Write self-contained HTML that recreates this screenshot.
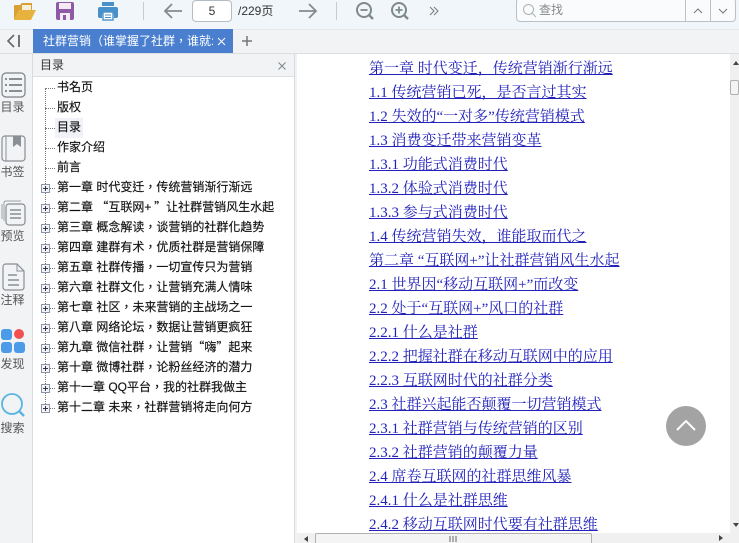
<!DOCTYPE html>
<html><head><meta charset="utf-8"><style>
html,body{margin:0;padding:0}
body{width:739px;height:543px;overflow:hidden;position:relative;background:#fff;font-family:"Liberation Sans","Noto Sans CJK SC",sans-serif;color:#333}
div,a,svg{position:absolute}
.toc{left:57px;font-family:"Liberation Sans","Noto Sans CJK TC",sans-serif;font-size:12px;line-height:20px;height:20px;white-space:nowrap;color:#111;-webkit-text-stroke:.15px #111}
.q{font-family:"Noto Sans CJK SC",sans-serif}
.p{letter-spacing:2.700px}
.box{left:41px;width:9px;height:9px;box-sizing:border-box;border:1px solid #8a96a8;background:#f2f4f8}
.box:before{content:"";position:absolute;left:1px;top:3px;width:5px;height:1px;background:#334}
.box:after{content:"";position:absolute;left:3px;top:1px;width:1px;height:5px;background:#334}
.dh{left:45px;width:10px;height:0;border-top:1px dotted #777}
.c{left:369px;font-family:"Liberation Serif","Noto Serif CJK SC",serif;font-size:15px;line-height:24px;height:24px;white-space:nowrap;color:#2222bb;text-decoration:underline}
.sl{left:0;width:33px;text-align:center;font-size:12px;line-height:14px;color:#555}
</style></head><body>
<div style="left:0;top:0;width:739px;height:29px;background:#f1f6fa"></div>
<div style="left:0;top:29px;width:739px;height:25px;background:#f1f3f5;border-top:1px solid #e4e8ec;box-sizing:border-box"></div>
<div style="left:0;top:53px;width:739px;height:1px;background:#dcdfe2"></div>

<svg style="left:13px;top:2px" width="24" height="19" viewBox="0 0 24 19"><path d="M1 18V4q0-1 1-1h5l2-2h10v7H6L1 18z" fill="#d9a035"/><path d="M9 3h9v5H9z" fill="#f6efdc"/><path d="M6 8h17l-5 10H1z" fill="#e8b23f"/></svg>
<svg style="left:56px;top:2px" width="19" height="19" viewBox="0 0 19 19"><rect x="0" y="0" width="18" height="18" rx="2" fill="#8e5aa5"/><rect x="3" y="1" width="12" height="6" fill="#f3eaf6"/><rect x="4" y="11" width="10" height="7" fill="#f3eaf6"/><rect x="7" y="13" width="3" height="5" fill="#8e5aa5"/></svg>
<svg style="left:98px;top:2px" width="20" height="19" viewBox="0 0 20 19"><rect x="4" y="0" width="12" height="4" fill="#4a90c8"/><path d="M2 5h16q2 0 2 2v7q0 2-2 2h-2v-4H4v4H2q-2 0-2-2V7q0-2 2-2z" fill="#4a90c8"/><rect x="5" y="10" width="10" height="8" fill="#fff" stroke="#4a90c8" stroke-width="1.400"/><path d="M7 13h6M7 15.500h6" stroke="#4a90c8"/></svg>
<div style="left:143px;top:2px;width:1px;height:18px;background:#c8ccd0"></div>
<svg style="left:163px;top:2px" width="20" height="18" viewBox="0 0 20 18"><path d="M9 2L2 9l7 7M2 9h17" fill="none" stroke="#88898b" stroke-width="1.800"/></svg>
<div style="left:192px;top:0;width:40px;height:22px;box-sizing:border-box;border:1px solid #b4bcc4;border-radius:4px;background:#fff;text-align:center;font-size:12px;line-height:20px;color:#333">5</div>
<div style="left:238px;top:2px;font-size:12px;line-height:18px;color:#333;white-space:nowrap">/229页</div>
<svg style="left:298px;top:2px" width="20" height="18" viewBox="0 0 20 18"><path d="M11 2l7 7-7 7M18 9H1" fill="none" stroke="#88898b" stroke-width="1.800"/></svg>
<div style="left:336px;top:2px;width:1px;height:18px;background:#c8ccd0"></div>
<svg style="left:355px;top:1px" width="20" height="20" viewBox="0 0 20 20"><circle cx="9" cy="9" r="7" fill="none" stroke="#7e8a8a" stroke-width="2"/><path d="M14 14l4 4" stroke="#7e8a8a" stroke-width="2.400"/><path d="M5.500 9h7" stroke="#7e8a8a" stroke-width="1.800"/></svg>
<svg style="left:390px;top:1px" width="20" height="20" viewBox="0 0 20 20"><circle cx="9" cy="9" r="7" fill="none" stroke="#7e8a8a" stroke-width="2"/><path d="M14 14l4 4" stroke="#7e8a8a" stroke-width="2.400"/><path d="M5.500 9h7M9 5.500v7" stroke="#7e8a8a" stroke-width="1.800"/></svg>
<svg style="left:429px;top:6px" width="10" height="10" viewBox="0 0 10 10"><path d="M1 1l4 4-4 4M5 1l4 4-4 4" fill="none" stroke="#777" stroke-width="1"/></svg>

<div style="left:516px;top:-2px;width:220px;height:24px;box-sizing:border-box;border:1px solid #b8c0c8;border-radius:4px;background:#f9fbfc"></div>
<div style="left:685px;top:0;width:1px;height:22px;background:#b8c0c8"></div>
<div style="left:710px;top:0;width:1px;height:22px;background:#b8c0c8"></div>
<svg style="left:522px;top:3px" width="15" height="15" viewBox="0 0 15 15"><circle cx="6.500" cy="6.500" r="5" fill="none" stroke="#aab2b8"/><path d="M10 10l4 4" stroke="#aab2b8"/></svg>
<div style="left:539px;top:2px;font-size:12px;line-height:17px;color:#888">查找</div>
<svg style="left:693px;top:8px" width="10" height="6" viewBox="0 0 10 6"><path d="M1 5l4-4 4 4" fill="none" stroke="#777"/></svg>
<svg style="left:718px;top:8px" width="10" height="6" viewBox="0 0 10 6"><path d="M1 1l4 4 4-4" fill="none" stroke="#777"/></svg>

<svg style="left:6px;top:34px" width="15" height="14" viewBox="0 0 15 14"><path d="M8 1L2 7l6 6" fill="none" stroke="#666" stroke-width="1.600"/><path d="M13 1v12" stroke="#666" stroke-width="1.800"/></svg>
<div style="left:33px;top:29px;width:200px;height:24px;background:#4a7fd0"></div>
<div style="left:43px;top:29px;width:170px;height:24px;overflow:hidden;font-family:'Liberation Sans','Noto Sans CJK TC',sans-serif;font-size:12px;line-height:24px;color:#fff;white-space:nowrap">社群营销（谁掌握了社群，谁就:</div>
<svg style="left:217px;top:37px" width="9" height="9" viewBox="0 0 9 9"><path d="M1 1l7 7M8 1L1 8" stroke="#fff"/></svg>
<svg style="left:241px;top:35px" width="12" height="12" viewBox="0 0 12 12"><path d="M1 6h10M6 1v10" stroke="#777" stroke-width="1.500"/></svg>

<!-- left rail -->
<div style="left:0;top:54px;width:32px;height:489px;background:#f1f3f5;border-right:1px solid #d8dbde"></div>
<svg style="left:1px;top:72px" width="25" height="26" viewBox="0 0 25 26"><rect x="1" y="1" width="23" height="24" rx="4" fill="#f1f3f5" stroke="#7c8288" stroke-width="1.200"/><path d="M4 7h2M8 7h13M4 13h2M8 13h13M4 19h2M8 19h13" stroke="#666c72" stroke-width="1.600"/></svg>
<div class="sl" style="top:100px;left:-4px">目录</div>
<svg style="left:1px;top:135px" width="25" height="28" viewBox="0 0 25 28"><rect x="1" y="1" width="23" height="25" rx="3" fill="none" stroke="#8a8f95" stroke-width="1.200"/><path d="M5 1v25" stroke="#8a8f95"/><path d="M12 1h8v11l-4-3-4 3z" fill="#8a8f95"/></svg>
<div class="sl" style="top:165px;left:-4px">书签</div>
<svg style="left:1px;top:199px" width="26" height="28" viewBox="0 0 26 28"><path d="M3 22V4q0-2 2-2h15M1 20V5" fill="none" stroke="#9aa0a6"/><rect x="5" y="5" width="19" height="21" rx="3" fill="#f1f3f5" stroke="#878c92" stroke-width="1.200"/><path d="M9 11h11M9 15h11M9 19h11" stroke="#878c92" stroke-width="1.500"/></svg>
<div class="sl" style="top:229px;left:-4px">预览</div>
<svg style="left:2px;top:263px" width="23" height="28" viewBox="0 0 23 28"><path d="M15 1H4Q1 1 1 4v20q0 3 3 3h15q3 0 3-3V8z" fill="none" stroke="#8a8f95" stroke-width="1.200"/><path d="M15 1v7h7" fill="none" stroke="#8a8f95"/><path d="M6 12h9M6 17h11M6 22h11" stroke="#8a8f95" stroke-width="1.500"/></svg>
<div class="sl" style="top:293px;left:-4px">注释</div>
<div style="left:1px;top:329px;width:11px;height:11px;border-radius:3px;background:#4c9be8"></div>
<div style="left:14px;top:329px;width:10px;height:10px;border-radius:50%;background:#f05050"></div>
<div style="left:1px;top:342px;width:11px;height:11px;border-radius:3px;background:#4c9be8"></div>
<div style="left:14px;top:342px;width:11px;height:11px;border-radius:3px;background:#4c9be8"></div>
<div class="sl" style="top:357px;left:-4px">发现</div>
<svg style="left:0;top:392px" width="26" height="26" viewBox="0 0 26 26"><circle cx="12" cy="12" r="10" fill="none" stroke="#58b4e0" stroke-width="1.800"/><path d="M19 19l5 5" stroke="#58b4e0" stroke-width="2.400"/></svg>
<div class="sl" style="top:421px;left:-4px">搜索</div>

<!-- toc panel -->
<div style="left:33px;top:54px;width:262px;height:489px;background:#fff;border-right:1px solid #d8dbde;box-sizing:border-box"></div>
<div style="left:33px;top:54px;width:261px;height:23px;background:#f1f3f5;border-bottom:1px solid #dcdfe2;box-sizing:border-box"></div>
<div style="left:40px;top:56px;font-size:12px;line-height:18px;color:#333">目录</div>
<svg style="left:278px;top:62px" width="8" height="8" viewBox="0 0 8 8"><path d="M0.500 0.500l7 7M7.500 0.500l-7 7" stroke="#7a828a"/></svg>
<div style="left:295px;top:54px;width:2px;height:489px;background:#f1f2f3"></div>

<div style="left:45px;top:88px;height:320px;width:0;border-left:1px dotted #777"></div>
<div class="dh" style="top:88px"></div><div class="dh" style="top:108px"></div><div class="dh" style="top:128px"></div><div class="dh" style="top:148px"></div><div class="dh" style="top:168px"></div>
<div class="dh" style="top:188px"></div><div class="dh" style="top:208px"></div><div class="dh" style="top:228px"></div><div class="dh" style="top:248px"></div><div class="dh" style="top:268px"></div><div class="dh" style="top:288px"></div><div class="dh" style="top:308px"></div><div class="dh" style="top:328px"></div><div class="dh" style="top:348px"></div><div class="dh" style="top:368px"></div><div class="dh" style="top:388px"></div><div class="dh" style="top:408px"></div>
<div class="box" style="top:184px"></div><div class="box" style="top:204px"></div><div class="box" style="top:224px"></div><div class="box" style="top:244px"></div><div class="box" style="top:264px"></div><div class="box" style="top:284px"></div><div class="box" style="top:304px"></div><div class="box" style="top:324px"></div><div class="box" style="top:344px"></div><div class="box" style="top:364px"></div><div class="box" style="top:384px"></div><div class="box" style="top:404px"></div>
<div style="left:55px;top:118px;width:28px;height:20px;background:#f0f2f8"></div>
<div class="toc" style="top:77px">书名页</div>
<div class="toc" style="top:97px">版权</div>
<div class="toc" style="top:117px">目录</div>
<div class="toc" style="top:137px">作家介绍</div>
<div class="toc" style="top:157px">前言</div>
<div class="toc" style="top:177px">第一章 时代变迁，传统营销渐行渐远</div>
<div class="toc" style="top:197px">第二章 <span class="q">“</span>互联网<span class="p">+</span><span class="q">”</span>让社群营销风生水起</div>
<div class="toc" style="top:217px">第三章 概念解读，谈营销的社群化趋势</div>
<div class="toc" style="top:237px">第四章 建群有术，优质社群是营销保障</div>
<div class="toc" style="top:257px">第五章 社群传播，一切宣传只为营销</div>
<div class="toc" style="top:277px">第六章 社群文化，让营销充满人情味</div>
<div class="toc" style="top:297px">第七章 社区，未来营销的主战场之一</div>
<div class="toc" style="top:317px">第八章 网络论坛，数据让营销更疯狂</div>
<div class="toc" style="top:337px">第九章 微信社群，让营销<span class="q">“</span>嗨<span class="q">”</span>起来</div>
<div class="toc" style="top:357px">第十章 微博社群，论粉丝经济的潜力</div>
<div class="toc" style="top:377px">第十一章 QQ平台，我的社群我做主</div>
<div class="toc" style="top:397px">第十二章 未来，社群营销将走向何方</div>

<!-- content -->
<div class="c" style="top:57px">第一章 时代变迁，传统营销渐行渐远</div>
<div class="c" style="top:81px">1.1 传统营销已死，是否言过其实</div>
<div class="c" style="top:105px">1.2 失效的“一对多”传统营销模式</div>
<div class="c" style="top:129px">1.3 消费变迁带来营销变革</div>
<div class="c" style="top:153px">1.3.1 功能式消费时代</div>
<div class="c" style="top:177px">1.3.2 体验式消费时代</div>
<div class="c" style="top:201px">1.3.3 参与式消费时代</div>
<div class="c" style="top:225px">1.4 传统营销失效，谁能取而代之</div>
<div class="c" style="top:249px">第二章 “互联网+”让社群营销风生水起</div>
<div class="c" style="top:273px">2.1 世界因“移动互联网+”而改变</div>
<div class="c" style="top:297px">2.2 处于“互联网+”风口的社群</div>
<div class="c" style="top:321px">2.2.1 什么是社群</div>
<div class="c" style="top:345px">2.2.2 把握社群在移动互联网中的应用</div>
<div class="c" style="top:369px">2.2.3 互联网时代的社群分类</div>
<div class="c" style="top:393px">2.3 社群兴起能否颠覆一切营销模式</div>
<div class="c" style="top:417px">2.3.1 社群营销与传统营销的区别</div>
<div class="c" style="top:441px">2.3.2 社群营销的颠覆力量</div>
<div class="c" style="top:465px">2.4 席卷互联网的社群思维风暴</div>
<div class="c" style="top:489px">2.4.1 什么是社群思维</div>
<div class="c" style="top:513px">2.4.2 移动互联网时代要有社群思维</div>

<!-- back to top -->
<div style="left:666px;top:406px;width:40px;height:40px;border-radius:50%;background:#a3a3a3"></div>
<svg style="left:675px;top:417px" width="22" height="16" viewBox="0 0 22 16"><path d="M2 13L11 4l9 9" fill="none" stroke="#fff" stroke-width="2"/></svg>

<!-- scrollbars -->
<div style="left:730px;top:54px;width:9px;height:489px;background:#f0f0f0"></div>
<svg style="left:733px;top:61px" width="6" height="4" viewBox="0 0 6 4"><path d="M3 0L6 4H0z" fill="#444"/></svg>
<div style="left:730px;top:80px;width:9px;height:15px;box-sizing:border-box;border:1px solid #b0b0b0;border-radius:2px;background:#f4f4f4"></div>
<svg style="left:733px;top:523px" width="6" height="4" viewBox="0 0 6 4"><path d="M0 0h6L3 4z" fill="#444"/></svg>
<div style="left:297px;top:533px;width:442px;height:10px;background:#f0f0f0"></div>
<svg style="left:304px;top:536px" width="4" height="6" viewBox="0 0 4 6"><path d="M4 0v6L0 3z" fill="#444"/></svg>
<svg style="left:719px;top:535px" width="4" height="6" viewBox="0 0 4 6"><path d="M0 0v6l4-3z" fill="#444"/></svg>
<div style="left:315px;top:533px;width:277px;height:10px;box-sizing:border-box;border:1px solid #b0b0b0;border-bottom:0;border-radius:2px 2px 0 0;background:#f4f4f4"></div>
<svg style="left:449px;top:536px" width="8" height="6" viewBox="0 0 8 6"><path d="M1 0v6M4 0v6M7 0v6" stroke="#666"/></svg>
</body></html>
